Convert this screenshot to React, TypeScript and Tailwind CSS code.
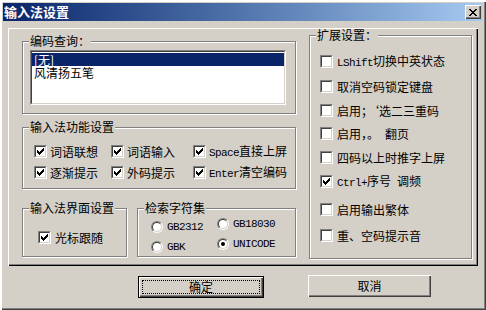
import type { ReactNode } from 'react';

const ascii = "font-['Liberation_Mono',monospace] text-[11px] tracking-[-0.6px]";

function CheckMark() {
  return (
    <svg width="7" height="7" viewBox="0 0 7 7" shapeRendering="crispEdges">
      <rect x="6" y="0" width="1" height="1" />
      <rect x="5" y="1" width="2" height="1" />
      <rect x="0" y="2" width="1" height="1" />
      <rect x="4" y="2" width="3" height="1" />
      <rect x="0" y="3" width="2" height="1" />
      <rect x="3" y="3" width="3" height="1" />
      <rect x="0" y="4" width="5" height="1" />
      <rect x="1" y="5" width="3" height="1" />
      <rect x="2" y="6" width="1" height="1" />
    </svg>
  );
}

function CloseGlyph() {
  return (
    <svg width="8" height="7" viewBox="0 0 8 7" shapeRendering="crispEdges">
      <rect x="0" y="0" width="2" height="1" />
      <rect x="6" y="0" width="2" height="1" />
      <rect x="1" y="1" width="2" height="1" />
      <rect x="5" y="1" width="2" height="1" />
      <rect x="2" y="2" width="4" height="1" />
      <rect x="3" y="3" width="2" height="1" />
      <rect x="2" y="4" width="4" height="1" />
      <rect x="1" y="5" width="2" height="1" />
      <rect x="5" y="5" width="2" height="1" />
      <rect x="0" y="6" width="2" height="1" />
      <rect x="6" y="6" width="2" height="1" />
    </svg>
  );
}

function Check({ checked, label, gap = 'gap-[4px]' }: { checked?: boolean; label: ReactNode; gap?: string }) {
  return (
    <div className={`flex h-[13px] items-center ${gap}`}>
      <span className="flex h-[13px] w-[13px] shrink-0 border border-t-[#808080] border-l-[#808080] border-b-white border-r-white">
        <span className="flex flex-1 items-center justify-center border border-t-[#404040] border-l-[#404040] border-b-[#d4d0c8] border-r-[#d4d0c8] bg-white">
          {checked && <CheckMark />}
        </span>
      </span>
      <span className="whitespace-nowrap text-[12px] leading-[13px]">{label}</span>
    </div>
  );
}

function Radio({ checked, label }: { checked?: boolean; label: string }) {
  return (
    <div className="flex h-[12px] items-center gap-[4px]">
      <span className="flex h-[12px] w-[12px] shrink-0 rounded-full border border-t-[#808080] border-l-[#808080] border-b-white border-r-white">
        <span className="flex flex-1 items-center justify-center rounded-full border border-t-[#404040] border-l-[#404040] border-b-[#d4d0c8] border-r-[#d4d0c8] bg-white">
          {checked && <span className="h-[4px] w-[4px] rounded-full bg-black" />}
        </span>
      </span>
      <span className={`whitespace-nowrap leading-[12px] ${ascii}`}>{label}</span>
    </div>
  );
}

function Group({ label, className, children }: { label: string; className: string; children?: ReactNode }) {
  return (
    <div className={`relative border border-[#808080] shadow-[inset_1px_1px_#fff,1px_1px_#fff] ${className}`}>
      <span className="absolute -top-[7px] left-[6px] bg-[#d4d0c8] px-[1px] text-[12px] leading-[12px] whitespace-nowrap">
        {label}
      </span>
      {children}
    </div>
  );
}

const extRows: { mt: string; checked?: boolean; label: ReactNode }[] = [
  { mt: 'mt-[19px]', label: <><span className={ascii}>LShift</span>切换中英状态</> },
  { mt: 'mt-[12px]', label: '取消空码锁定键盘' },
  { mt: 'mt-[11px]', label: '启用；‘选二三重码' },
  { mt: 'mt-[10px]', label: '启用，。　翻页' },
  { mt: 'mt-[11px]', label: '四码以上时推字上屏' },
  { mt: 'mt-[11px]', checked: true, label: <><span className={ascii}>Ctrl+</span>序号<span className={ascii}> </span>调频</> },
  { mt: 'mt-[15px]', label: '启用输出繁体' },
  { mt: 'mt-[13px]', label: '重、空码提示音' },
];

const raised = 'shadow-[inset_1px_1px_#fff,inset_-1px_-1px_#404040,inset_-2px_-2px_#808080]';

export default function App() {
  return (
    <div className="font-['Noto_Sans_CJK_SC',sans-serif] text-black">
      <div className="flex h-[310px] w-[486px] flex-col bg-[#d4d0c8] pt-[3px] pl-[3px] pr-[4px] pb-[4px] shadow-[inset_2px_2px_#fff,inset_-1px_-1px_#404040,inset_-2px_-2px_#808080]">
        {/* title bar */}
        <div className="flex h-[18px] shrink-0 items-center justify-between bg-linear-to-r from-[#0a246a] to-[#a6caf0] pl-[1px] pr-[1px]">
          <span className="text-[13px] font-bold leading-[18px] text-white">输入法设置</span>
          <div className={`flex h-[14px] w-[16px] items-center justify-center bg-[#d4d0c8] ${raised}`}>
            <CloseGlyph />
          </div>
        </div>

        {/* main panel */}
        <div className="ml-[5px] mt-[7px] flex h-[238px] w-[470px] shrink-0 pl-[14px] pt-[1px] shadow-[inset_1px_1px_#fff,inset_-1px_-1px_#000,inset_-2px_-2px_#808080]">
          <div className="mt-[12px] flex w-[274px] flex-col">
            <Group label="编码查询：" className="h-[73px]">
              <div className="ml-[7px] mt-[8px] h-[55px] w-[256px] border border-t-[#808080] border-l-[#808080] border-b-white border-r-white">
                <div className="h-full border border-t-[#404040] border-l-[#404040] border-b-[#d4d0c8] border-r-[#d4d0c8] bg-white pt-[1px] text-[12px]">
                  <div className="flex h-[13px] items-center bg-[#0a246a] pl-[2px] text-white">
                    <span className="leading-[12px]">[无]</span>
                  </div>
                  <div className="flex h-[13px] items-center pl-[2px]">
                    <span className="leading-[12px]">风清扬五笔</span>
                  </div>
                </div>
              </div>
            </Group>

            <Group label="输入法功能设置" className="mt-[13px] h-[62px]">
              <div className="grid grid-cols-[77px_82px_1fr] gap-y-[8px] pl-[11px] pt-[17px]">
                <Check checked gap="gap-[3px]" label="词语联想" />
                <Check checked gap="gap-[3px]" label="词语输入" />
                <Check checked gap="gap-[3px]" label={<><span className={ascii}>Space</span>直接上屏</>} />
                <Check checked gap="gap-[3px]" label="逐渐提示" />
                <Check checked gap="gap-[3px]" label="外码提示" />
                <Check checked gap="gap-[3px]" label={<><span className={ascii}>Enter</span>清空编码</>} />
              </div>
            </Group>

            <div className="mt-[19px] flex h-[49px] gap-[10px]">
              <Group label="输入法界面设置" className="h-[49px] w-[105px] shrink-0">
                <div className="pl-[15px] pt-[22px]">
                  <Check checked label="光标跟随" />
                </div>
              </Group>
              <Group label="检索字符集" className="h-[49px] flex-1">
                <div className="flex pl-[13px]">
                  <div className="flex w-[66px] flex-col gap-[8px] pt-[12px]">
                    <Radio label="GB2312" />
                    <Radio label="GBK" />
                  </div>
                  <div className="flex flex-col gap-[8px] pt-[9px]">
                    <Radio label="GB18030" />
                    <Radio checked label="UNICODE" />
                  </div>
                </div>
              </Group>
            </div>
          </div>

          <Group label="扩展设置：" className="ml-[13px] mt-[6px] h-[224px] w-[163px]">
            <div className="flex flex-col pl-[10px]">
              {extRows.map((r, i) => (
                <div key={i} className={r.mt}>
                  <Check checked={r.checked} label={r.label} />
                </div>
              ))}
            </div>
          </Group>
        </div>

        {/* buttons */}
        <div className="mt-[10px] flex items-start text-[12px]">
          <div className="ml-[135px] flex h-[22px] w-[126px] border border-black">
            <div className={`flex flex-1 p-[3px] ${raised}`}>
              <div className="flex flex-1 items-center justify-center border border-dotted border-black leading-[12px]">确定</div>
            </div>
          </div>
          <div className={`-mt-[1px] ml-[44px] flex h-[22px] w-[123px] items-center justify-center ${raised}`}>
            取消
          </div>
        </div>
      </div>
    </div>
  );
}
